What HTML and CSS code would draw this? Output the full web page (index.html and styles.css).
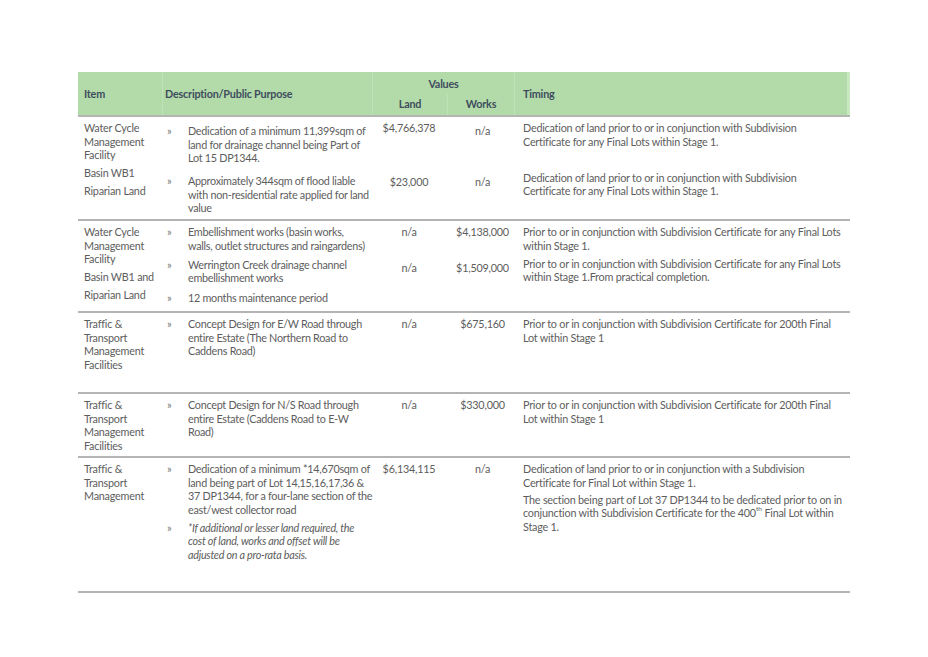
FILE: index.html
```html
<!DOCTYPE html>
<html>
<head>
<meta charset="utf-8">
<link rel="stylesheet" href="styles.css">
</head>
<body>
<div class="page">
  <div class="table">
    <div class="head">
      <div class="h-item">Item</div>
      <div class="h-desc">Description/Public Purpose</div>
      <div class="h-values">Values</div>
      <div class="h-land">Land</div>
      <div class="h-works">Works</div>
      <div class="h-timing">Timing</div>
    </div>

    <div class="row r1">
      <div class="c-item">
        <p>Water Cycle Management Facility</p>
        <p class="sp">Basin WB1</p>
        <p class="sp">Riparian Land</p>
      </div>
      <div class="c-desc">
        <div class="bul first"><span class="chev">»</span><span>Dedication of a minimum 11,399sqm of land for drainage channel being Part of Lot 15 DP1344.</span></div>
        <div class="bul b1-2"><span class="chev">»</span><span>Approximately 344sqm of flood liable with non-residential rate applied for land value</span></div>
      </div>
      <div class="c-land">
        <p>$4,766,378</p>
        <p class="l1-2">$23,000</p>
      </div>
      <div class="c-works">
        <p class="first">n/a</p>
        <p class="w1-2">n/a</p>
      </div>
      <div class="c-timing">
        <p>Dedication of land prior to or in conjunction with Subdivision Certificate for any Final Lots within Stage 1.</p>
        <p class="t1-2">Dedication of land prior to or in conjunction with Subdivision Certificate for any Final Lots within Stage 1.</p>
      </div>
    </div>

    <div class="row r2">
      <div class="c-item">
        <p>Water Cycle Management Facility</p>
        <p class="sp">Basin WB1 and</p>
        <p class="sp">Riparian Land</p>
      </div>
      <div class="c-desc">
        <div class="bul"><span class="chev">»</span><span>Embellishment works (basin works,<br>walls, outlet structures and raingardens)</span></div>
        <div class="bul b2-2"><span class="chev">»</span><span>Werrington Creek drainage channel embellishment works</span></div>
        <div class="bul b2-3"><span class="chev">»</span><span>12 months maintenance period</span></div>
      </div>
      <div class="c-land">
        <p>n/a</p>
        <p class="v2-2">n/a</p>
      </div>
      <div class="c-works">
        <p>$4,138,000</p>
        <p class="v2-2">$1,509,000</p>
      </div>
      <div class="c-timing">
        <p>Prior to or in conjunction with Subdivision Certificate for any Final Lots within Stage 1.</p>
        <p class="t2-2">Prior to or in conjunction with Subdivision Certificate for any Final Lots within Stage 1.From practical completion.</p>
      </div>
    </div>

    <div class="row r3">
      <div class="c-item">
        <p>Traffic &amp; Transport Management Facilities</p>
      </div>
      <div class="c-desc">
        <div class="bul"><span class="chev">»</span><span>Concept Design for E/W Road through entire Estate (The Northern Road to Caddens Road)</span></div>
      </div>
      <div class="c-land"><p>n/a</p></div>
      <div class="c-works"><p>$675,160</p></div>
      <div class="c-timing">
        <p>Prior to or in conjunction with Subdivision Certificate for 200th Final Lot within Stage 1</p>
      </div>
    </div>

    <div class="row r4">
      <div class="c-item">
        <p>Traffic &amp; Transport Management Facilities</p>
      </div>
      <div class="c-desc">
        <div class="bul"><span class="chev">»</span><span>Concept Design for N/S Road through entire Estate (Caddens Road to E-W Road)</span></div>
      </div>
      <div class="c-land"><p>n/a</p></div>
      <div class="c-works"><p>$330,000</p></div>
      <div class="c-timing">
        <p>Prior to or in conjunction with Subdivision Certificate for 200th Final Lot within Stage 1</p>
      </div>
    </div>

    <div class="row r5">
      <div class="c-item">
        <p>Traffic &amp; Transport Management</p>
      </div>
      <div class="c-desc">
        <div class="bul"><span class="chev">»</span><span>Dedication of a minimum *14,670sqm of land being part of Lot 14,15,16,17,36 &amp; 37 DP1344, for a four-lane section of the east/west collector road</span></div>
        <div class="bul b5-2"><span class="chev">»</span><em>*If additional or lesser land required, the cost of land, works and offset will be adjusted on a pro-rata basis.</em></div>
      </div>
      <div class="c-land"><p>$6,134,115</p></div>
      <div class="c-works"><p>n/a</p></div>
      <div class="c-timing">
        <p>Dedication of land prior to or in conjunction with a Subdivision Certificate for Final Lot within Stage 1.</p>
        <p class="t5-2">The section being part of Lot 37 DP1344 to be dedicated prior to on in conjunction with Subdivision Certificate for the 400<span class="ord">th</span> Final Lot within Stage 1.</p>
      </div>
    </div>
  </div>
</div>
</body>
</html>
```

FILE: styles.css
```css
html, body {
  margin: 0;
  padding: 0;
  background: #ffffff;
}

.page {
  padding: 72px 0 0 78px;
  font-family: Lato, "Open Sans", "Liberation Sans", sans-serif;
  font-size: 10.8px;
  letter-spacing: -0.22px;
  line-height: 13.5px;
  color: #5d5d5d;
}

.table {
  width: 772px;
}

p {
  margin: 0;
}

.head {
  display: grid;
  grid-template-columns: 85px 210px 75px 67px 335px;
  grid-template-rows: 22px 21px;
  background: #b3dba9;
  border-bottom: 2px solid #b4b4b4;
  color: #3f4d5e;
  font-weight: bold;
  letter-spacing: -0.2px;
}

.head > div {
  display: flex;
  align-items: center;
}

.h-item {
  grid-column: 1;
  grid-row: 1 / 3;
  padding-left: 6px;
  border-right: 1px solid #bfe2b6;
}

.h-desc {
  grid-column: 2;
  grid-row: 1 / 3;
  padding-left: 2px;
  border-right: 1px solid #bfe2b6;
}

.h-values {
  grid-column: 3 / 5;
  grid-row: 1;
  justify-content: center;
  padding-top: 2px;
  border-right: 1px solid #bfe2b6;
}

.h-land {
  grid-column: 3;
  grid-row: 2;
  justify-content: center;
  border-right: 1px solid #bfe2b6;
  padding-bottom: 2px;
}

.h-works {
  grid-column: 4;
  grid-row: 2;
  justify-content: center;
  border-right: 1px solid #bfe2b6;
  padding-bottom: 2px;
}

.h-timing {
  grid-column: 5;
  grid-row: 1 / 3;
  padding-left: 8px;
  border-right: 3px solid #c8e8c0;
}

.row {
  display: grid;
  grid-template-columns: 85px 210px 75px 67px 335px;
  border-bottom: 2px solid #b4b4b4;
  box-sizing: border-box;
  padding-top: 4px;
}

.r1 { height: 104px; }
.r2 { height: 92px; }
.r3 { height: 81px; }
.r4 { height: 64px; }
.r5 { height: 135px; }

.c-item {
  padding-left: 6px;
}

.c-item .sp {
  margin-top: 4.5px;
}

.c-desc {
  padding-left: 4px;
  padding-right: 0;
  letter-spacing: -0.27px;
}

.bul {
  display: flex;
}

.bul.first {
  margin-top: 3px;
}

.chev {
  flex: 0 0 21px;
  font-size: 11px;
  color: #7a7a7a;
}

.bul em {
  font-style: italic;
}

.b1-2 { margin-top: 9.5px; }
.b2-2 { margin-top: 5.5px; }
.b2-3 { margin-top: 6.5px; }
.b5-2 { margin-top: 4.5px; }

.c-land,
.c-works {
  text-align: center;
}

.c-land {
  padding-right: 3px;
}

.c-works {
  padding-left: 2px;
}

.c-works .first {
  margin-top: 3px;
}

.l1-2 { margin-top: 40.5px; }
.w1-2 { margin-top: 37.5px; }
.v2-2 { margin-top: 22.5px; }

.c-timing {
  padding-left: 8px;
  padding-right: 4px;
}

.t1-2 { margin-top: 22.5px; }
.t2-2 { margin-top: 4.5px; }
.t5-2 { margin-top: 3.5px; }

.ord {
  display: inline-block;
  font-size: 6.5px;
  line-height: 6px;
  vertical-align: top;
  letter-spacing: 0;
}
```
